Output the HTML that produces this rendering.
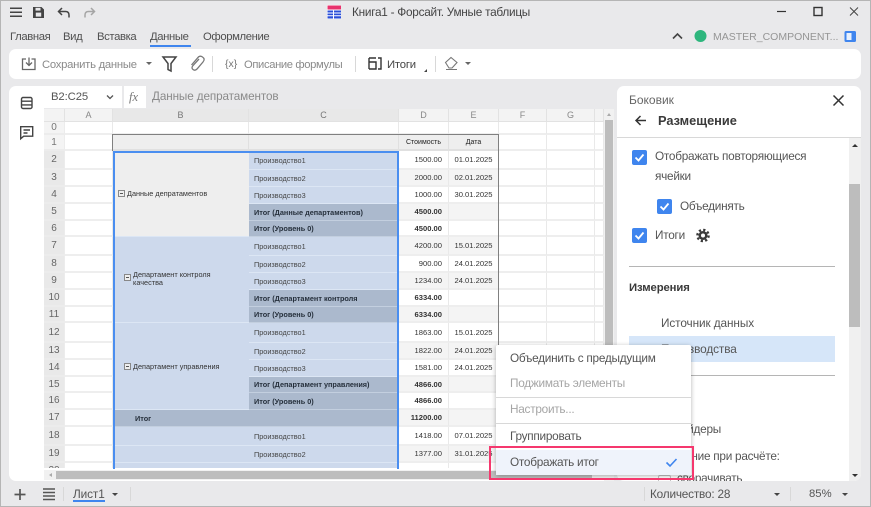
<!DOCTYPE html>
<html lang="ru"><head><meta charset="utf-8"><title>Книга1</title>
<style>
html,body{margin:0;padding:0}
body{width:871px;height:507px;overflow:hidden;position:relative;background:#e9e9eb;font-family:"Liberation Sans",sans-serif;color:#555}
.a{position:absolute}
.t{position:absolute;white-space:nowrap;line-height:16px;font-size:11.8px;letter-spacing:-.26px;margin-top:1px}
.tab{font-size:11.3px;letter-spacing:-.38px;color:#505050}
.g{color:#8a8a8a}
svg{position:absolute;overflow:visible}
.sep{position:absolute;width:1px;background:#d8d8d8}
.arr{position:absolute;width:0;height:0;border-left:3px solid transparent;border-right:3px solid transparent;border-top:3px solid #666}
#grid{position:absolute;left:44px;top:109px;width:560px;height:359px;overflow:hidden;background:#fff}
table{border-collapse:separate;border-spacing:0;table-layout:fixed;width:560px;font-size:7.3px;color:#333}
td{box-sizing:border-box;padding:0;border-right:1px solid #e9e9e9;border-bottom:2px solid #eeeeee;overflow:hidden;white-space:nowrap;line-height:9px}
.h{background:#f3f3f3;color:#888;text-align:center;font-size:9px;border-color:#e2e2e2;border-bottom-width:1px}
.hs{background:#e8e8e8;color:#777}
.r{background:#f4f4f4;color:#777;text-align:center;font-size:10px;border-color:#ececec}
.rs{background:#e9e9e9;color:#666}
.c{background:#cdd9ec;border-color:#dce6f4;border-bottom-width:1px;padding-left:5px;color:#444;border-right:0}
.s{background:#abb9cd;border-color:#c3cfdf;border-bottom-width:1px;padding-left:5px;font-weight:bold;color:#26303c;border-right:0}
.b{background:#cdd9ec;border-color:#dce6f4;border-bottom-width:1px;border-right:0;position:relative}
.n{text-align:right;padding-right:6px;color:#333;font-size:7.6px}
.d{text-align:center;color:#333;font-size:7.6px}
.w{background:#fff}.f{background:#f4f4f4}
.k{font-weight:bold}
.hh{background:#eeeeee;text-align:center;font-size:7px;color:#222;border-color:#e0e0e0}
.m{display:inline-block;box-sizing:border-box;width:7px;height:7px;border:1px solid #888;background:#eee;position:relative;vertical-align:-1px;margin-right:2px}
.m:after{content:"";position:absolute;left:1px;right:1px;top:2px;height:1px;background:#555}
.cb{position:absolute;width:15px;height:15px;border-radius:2px;background:#3f85ee}
.mi{position:absolute;left:510px;white-space:nowrap;line-height:16px;font-size:11.8px;letter-spacing:-.26px;color:#555}
</style></head><body>

<div class="a" style="left:0;top:0;width:871px;height:1px;background:#b5b5b5"></div>
<div class="a" style="left:0;top:0;width:1px;height:507px;background:#b5b5b5"></div>
<div class="a" style="left:870px;top:0;width:1px;height:507px;background:#b5b5b5"></div>
<div class="a" style="left:0;top:506px;width:871px;height:1px;background:#b5b5b5"></div>

<!-- title bar -->
<svg style="left:0;top:0" width="871" height="48" fill="none" stroke="#444" stroke-width="1.5">
<path d="M10 8.200H22M10 12.200H22M10 16.200H22"/>
<path d="M33 7h8.500l2.500 2.500V18H33z" fill="#444" stroke="none"/><rect x="35.500" y="7.800" width="5" height="2.800" fill="#e9e9eb" stroke="none"/><rect x="35.800" y="12.600" width="5.400" height="4" fill="#e9e9eb" stroke="none"/>
<path d="M62 8 58.500 11.500 62 15M59 11.500h6.500q3.500 0 3.500 3.500v2.500"/>
<path d="M91 8 94.500 11.500 91 15M94 11.500h-5.500q-3.500 0-3.500 3.500v2.500" stroke="#a5a5a5"/>
<rect x="327" y="5" width="14" height="14" fill="#fff" stroke="none"/>
<rect x="327.500" y="5.500" width="13.500" height="4" fill="#e8336d" stroke="none"/>
<path d="M327.500 10.500h13.500v8h-13.500z" fill="#2a4fd8" stroke="none"/>
<path d="M327.500 13h13.500M327.500 15.800h13.500M333.500 10v9" stroke="#fff" stroke-width="1"/>
<path d="M777 11.500h9" stroke="#333" stroke-width="1.200"/>
<rect x="814" y="7.500" width="8" height="8" stroke="#333" stroke-width="1.400"/>
<path d="M850 7.500l8 8M858 7.500l-8 8" stroke="#444" stroke-width="1"/>
<path d="M673 38.500l4.500-4.500 4.500 4.500" stroke="#444" stroke-width="1.600"/>
<circle cx="700.500" cy="36" r="6" fill="#2eb67d" stroke="none"/>
<rect x="844.500" y="31" width="11.500" height="11" rx="1.500" fill="#3f85ee" stroke="none"/><rect x="846.500" y="33" width="5" height="7" fill="#e7f0fd" stroke="none"/>
</svg>
<div class="t" style="left:352px;top:3px;color:#444">Книга1 - Форсайт. Умные таблицы</div>
<div class="t tab" style="left:10px;top:28px">Главная</div>
<div class="t tab" style="left:63px;top:28px">Вид</div>
<div class="t tab" style="left:97px;top:28px">Вставка</div>
<div class="t tab" style="left:150px;top:28px">Данные</div>
<div class="t tab" style="left:203px;top:28px">Оформление</div>
<div class="a" style="left:150px;top:45px;width:41px;height:1.500px;background:#3f85ee"></div>
<div class="t g" style="left:713px;top:28px;font-size:10.500px;letter-spacing:0;color:#959595">MASTER_COMPONENT...</div>

<!-- toolbar -->
<div class="a" style="left:9px;top:49px;width:852px;height:30px;background:#fff;border-radius:7px"></div>
<svg style="left:0;top:49px" width="500" height="30" fill="none" stroke="#777" stroke-width="1.300">
<path d="M26 10h-3.500v10.500h12.500V10h-3.500M29 8.500v8M26 13.500l3 3 3-3" stroke="#666"/>
<path d="M163 8h13l-5 6.500V22l-3-1.500v-6z" stroke="#444" stroke-width="1.500"/>
<path d="M199 10l-6 6.500q-2 2.500 0 4t4-.5l6-7q2.500-3-.5-5t-5 1l-6 7" stroke="#777"/>
<path d="M369 9h7M369 13h7v7h-7M378 9h3v11h-3M369 9v11" stroke="#333" stroke-width="1.400"/>
<path d="M424 23l3-3v3z" fill="#444" stroke="none"/>
<path d="M445.500 13.500l5.500-5 6 5-5 5.500h-3zM446 20.500h11" stroke="#777" stroke-width="1.100"/>
</svg>
<div class="t g" style="left:225px;top:55px;font-size:10.500px;letter-spacing:0;color:#777">{x}</div>
<div class="t g" style="left:42px;top:56px;font-size:11.300px;letter-spacing:-.27px">Сохранить данные</div>
<div class="arr" style="left:146px;top:62px"></div>
<div class="sep" style="left:212px;top:56px;height:16px"></div>
<div class="t g" style="left:244px;top:56px;font-size:11.200px;letter-spacing:-.35px">Описание формулы</div>
<div class="sep" style="left:355px;top:56px;height:16px"></div>
<div class="t" style="left:387px;top:56px;color:#444;font-size:11.300px;letter-spacing:-.2px">Итоги</div>
<div class="sep" style="left:435px;top:56px;height:16px"></div>
<div class="arr" style="left:465px;top:62px"></div>

<!-- left strip -->
<div class="a" style="left:9px;top:86px;width:40px;height:395px;background:#fff;border-radius:7px 0 0 7px"></div>
<svg style="left:0;top:86px" width="44" height="60" fill="none" stroke="#444" stroke-width="1.400">
<rect x="21.500" y="11.500" width="10.500" height="11" rx="1.500"/><path d="M21.500 15.200h10.500M21.500 18.900h10.500"/>
<path d="M20.700 40.700h12v9.500h-9l-3 2.500z"/><path d="M23.500 44h6.500M23.500 47h4" />
</svg>

<!-- sheet area -->
<div class="a" style="left:44px;top:86px;width:570px;height:395px;background:#fff"></div>
<div class="a" style="left:44px;top:86px;width:573px;height:23px;background:#e9e9eb"></div>
<div class="a" style="left:44px;top:86px;width:78px;height:22px;background:#fff"></div>
<div class="a" style="left:124px;top:86px;width:22px;height:22px;background:#fff"></div>
<div class="t" style="left:51px;top:88px;color:#555;font-size:11.300px;letter-spacing:-.1px">B2:C25</div>
<svg style="left:0;top:86px" width="122" height="22" fill="none" stroke="#555" stroke-width="1.300"><path d="M107 9.500l3 3 3-3"/></svg>
<div class="t" style="left:129px;top:88px;font-family:'Liberation Serif',serif;font-style:italic;color:#777;font-size:12.500px;letter-spacing:0">fx</div>
<div class="t g" style="left:152px;top:88px;font-size:11.700px;letter-spacing:-.1px">Данные депратаментов</div>

<div id="grid"><table>
<colgroup><col style="width:21px"><col style="width:48px"><col style="width:136px"><col style="width:150px"><col style="width:50px"><col style="width:50px"><col style="width:48px"><col style="width:48px"><col style="width:9px"></colgroup>
<tr style="height:13px"><td class="h"></td><td class="h">A</td><td class="h hs">B</td><td class="h hs">C</td><td class="h">D</td><td class="h">E</td><td class="h">F</td><td class="h">G</td><td class="h"></td></tr>
<tr style="height:13px"><td class="r">0</td><td></td><td></td><td></td><td></td><td></td><td></td><td></td><td></td></tr>
<tr style="height:16px"><td class="r">1</td><td></td><td class="hh"></td><td class="hh"></td><td class="hh">Стоимость</td><td class="hh">Дата</td><td></td><td></td><td></td></tr>
<tr style="height:19px"><td class="r rs">2</td><td></td><td rowspan="5" class="b" style="background:#eeeeee;padding-left:5px;border-color:#dce6f4"><span class="m"></span>Данные депратаментов</td><td class="c">Производство1</td><td class="n w">1500.00</td><td class="d w">01.01.2025</td><td></td><td></td><td></td></tr>
<tr style="height:17px"><td class="r rs">3</td><td></td><td class="c">Производство2</td><td class="n f">2000.00</td><td class="d f">02.01.2025</td><td></td><td></td><td></td></tr>
<tr style="height:17px"><td class="r rs">4</td><td></td><td class="c">Производство3</td><td class="n w">1000.00</td><td class="d w">30.01.2025</td><td></td><td></td><td></td></tr>
<tr style="height:17px"><td class="r rs">5</td><td></td><td class="s">Итог (Данные департаментов)</td><td class="n f k">4500.00</td><td class="d f"></td><td></td><td></td><td></td></tr>
<tr style="height:16px"><td class="r rs">6</td><td></td><td class="s">Итог (Уровень 0)</td><td class="n w k">4500.00</td><td class="d w"></td><td></td><td></td><td></td></tr>
<tr style="height:19px"><td class="r rs">7</td><td></td><td rowspan="5" class="b" style="padding-left:11px"><span class="m" style="position:absolute;left:11px;top:37px"></span><div style="margin-left:9px;line-height:8px;margin-top:-2px">Департамент контроля<br>качества</div></td><td class="c">Производство1</td><td class="n f">4200.00</td><td class="d f">15.01.2025</td><td></td><td></td><td></td></tr>
<tr style="height:17px"><td class="r rs">8</td><td></td><td class="c">Производство2</td><td class="n w">900.00</td><td class="d w">24.01.2025</td><td></td><td></td><td></td></tr>
<tr style="height:17px"><td class="r rs">9</td><td></td><td class="c">Производство3</td><td class="n f">1234.00</td><td class="d f">24.01.2025</td><td></td><td></td><td></td></tr>
<tr style="height:17px"><td class="r rs">10</td><td></td><td class="s">Итог (Департамент контроля</td><td class="n w k">6334.00</td><td class="d w"></td><td></td><td></td><td></td></tr>
<tr style="height:16px"><td class="r rs">11</td><td></td><td class="s">Итог (Уровень 0)</td><td class="n f k">6334.00</td><td class="d f"></td><td></td><td></td><td></td></tr>
<tr style="height:20px"><td class="r rs">12</td><td></td><td rowspan="5" class="b" style="padding-left:11px"><span class="m"></span>Департамент управления</td><td class="c">Производство1</td><td class="n w">1863.00</td><td class="d w">15.01.2025</td><td></td><td></td><td></td></tr>
<tr style="height:17px"><td class="r rs">13</td><td></td><td class="c">Производство2</td><td class="n f">1822.00</td><td class="d f">24.01.2025</td><td></td><td></td><td></td></tr>
<tr style="height:17px"><td class="r rs">14</td><td></td><td class="c">Производство3</td><td class="n w">1581.00</td><td class="d w">24.01.2025</td><td></td><td></td><td></td></tr>
<tr style="height:16px"><td class="r rs">15</td><td></td><td class="s">Итог (Департамент управления)</td><td class="n f k">4866.00</td><td class="d f"></td><td></td><td></td><td></td></tr>
<tr style="height:17px"><td class="r rs">16</td><td></td><td class="s">Итог (Уровень 0)</td><td class="n w k">4866.00</td><td class="d w"></td><td></td><td></td><td></td></tr>
<tr style="height:17px"><td class="r rs">17</td><td></td><td colspan="2" class="s" style="padding-left:22px">Итог</td><td class="n f k">11200.00</td><td class="d f"></td><td></td><td></td><td></td></tr>
<tr style="height:19px"><td class="r rs">18</td><td></td><td class="b"></td><td class="c">Производство1</td><td class="n w">1418.00</td><td class="d w">07.01.2025</td><td></td><td></td><td></td></tr>
<tr style="height:17px"><td class="r rs">19</td><td></td><td class="b"></td><td class="c">Производство2</td><td class="n f">1377.00</td><td class="d f">31.01.2025</td><td></td><td></td><td></td></tr>
<tr style="height:17px"><td class="r rs">20</td><td></td><td class="b" style="padding:4px 0 0 5px;vertical-align:top"><span class="m"></span>Отдел</td><td class="c"></td><td class="n w"></td><td class="d w"></td><td></td><td></td><td></td></tr>
</table></div>
<!-- outer table border -->
<div class="a" style="left:113px;top:134px;width:385px;height:1px;background:#808080"></div>
<div class="a" style="left:498px;top:134px;width:1px;height:334px;background:#808080"></div>
<div class="a" style="left:112px;top:134px;width:1px;height:17px;background:#808080"></div>
<!-- selection -->
<div class="a" style="box-sizing:border-box;left:113px;top:151px;width:286px;height:318px;border:2px solid #4a8ef0;border-bottom:0"></div>

<!-- scrollbars -->
<div class="a" style="left:604px;top:109px;width:10px;height:372px;background:#f1f1f1"></div>
<div class="a" style="left:605px;top:120px;width:8px;height:351px;background:#bdbdbd"></div>
<div class="a" style="left:607px;top:113px;width:0;height:0;border-left:2px solid transparent;border-right:2px solid transparent;border-bottom:3px solid #aaa"></div>
<div class="a" style="left:44px;top:470px;width:570px;height:10px;background:#f1f1f1"></div>
<div class="a" style="left:56px;top:471px;width:536px;height:8px;background:#bdbdbd"></div>
<div class="a" style="left:49px;top:473px;width:0;height:0;border-top:2px solid transparent;border-bottom:2px solid transparent;border-right:3px solid #aaa"></div>

<!-- right panel -->
<div class="a" style="left:617px;top:86px;width:244px;height:395px;background:#fff;border-radius:7px;overflow:hidden">
 <div class="a" style="left:0;top:51px;width:244px;height:1px;background:#d8d8d8"></div>
 <div class="a" style="left:232px;top:52px;width:12px;height:343px;background:#f0f0f0"></div>
 <div class="a" style="left:232px;top:98px;width:11px;height:143px;background:#bdbdbd"></div>
 <div class="a" style="left:235px;top:58px;width:0;height:0;border-left:3px solid transparent;border-right:3px solid transparent;border-bottom:3px solid #333"></div>
 <div class="a" style="left:235px;top:388px;width:0;height:0;border-left:3px solid transparent;border-right:3px solid transparent;border-top:3px solid #333"></div>
 <div class="a" style="left:12px;top:180px;width:206px;height:1px;background:#b5b5b5"></div>
 <div class="a" style="left:12px;top:250px;width:206px;height:26px;background:#d6e6f9"></div>
 <div class="a" style="left:12px;top:289px;width:206px;height:1px;background:#b5b5b5"></div>
 <div class="a" style="left:41px;top:389px;width:11px;height:11px;border:1px solid #c4c4c4;border-radius:2px"></div>
</div>
<div class="t" style="left:629px;top:91px;color:#666;font-size:12px;letter-spacing:0">Боковик</div>
<svg style="left:617px;top:86px" width="244" height="160" fill="none" stroke="#333" stroke-width="1.500">
<path d="M216.500 9.500l10 10M226.500 9.500l-10 10"/>
<path d="M19 34.500h10M23.500 30l-4.500 4.500 4.500 4.500"/>
</svg>
<div class="t" style="left:658px;top:112px;font-weight:bold;font-size:12.800px;letter-spacing:0;color:#3a3a3a">Размещение</div>

<div class="cb" style="left:632px;top:150px"></div>
<div class="cb" style="left:657px;top:199px"></div>
<div class="cb" style="left:632px;top:228px"></div>
<svg style="left:0;top:0" width="871" height="300" fill="none" stroke="#fff" stroke-width="1.800">
<path d="M635.500 157.500l3 3 5-6M660.500 206.500l3 3 5-6M635.500 235.500l3 3 5-6"/>
<circle cx="703" cy="235.500" r="4.500" fill="#3a3a3a" stroke="none"/>
<circle cx="703" cy="235.500" r="5.600" stroke="#3a3a3a" stroke-width="2.400" stroke-dasharray="2.200 2.200"/>
<circle cx="703" cy="235.500" r="2" fill="#fff" stroke="none"/>
</svg>
<div class="t" style="left:655px;top:147px">Отображать повторяющиеся</div>
<div class="t" style="left:655px;top:167px">ячейки</div>
<div class="t" style="left:680px;top:197px">Объединять</div>
<div class="t" style="left:655px;top:226px">Итоги</div>
<div class="t" style="left:629px;top:279px;font-weight:bold;color:#3a3a3a;font-size:11.300px;letter-spacing:-.1px">Измерения</div>
<div class="t" style="left:661px;top:314px;letter-spacing:-.1px">Источник данных</div>
<div class="t" style="left:661px;top:340px;letter-spacing:-.1px">Производства</div>
<div class="t" style="left:666px;top:420px">Слайдеры</div>
<div class="t" style="left:652px;top:447px">Поведение при расчёте:</div>
<div class="a" style="left:617px;top:470px;width:232px;height:11px;overflow:hidden"><div class="t" style="left:60px;top:-1px">сворачивать</div></div>

<!-- context menu -->
<div class="a" style="left:496px;top:345px;width:195px;height:130px;background:#fff;box-shadow:0 1px 5px rgba(0,0,0,.3);border-radius:2px"></div>
<div class="a" style="left:496px;top:397px;width:195px;height:1px;background:#d8d8d8"></div>
<div class="a" style="left:496px;top:423px;width:195px;height:1px;background:#d8d8d8"></div>
<div class="a" style="left:496px;top:450px;width:195px;height:25px;background:#eff3fb"></div>
<div class="mi" style="top:350px">Объединить с предыдущим</div>
<div class="mi" style="top:375px;color:#a5a5a5">Поджимать элементы</div>
<div class="mi" style="top:401px;color:#a5a5a5">Настроить...</div>
<div class="mi" style="top:428px">Группировать</div>
<div class="mi" style="top:454px">Отображать итог</div>
<svg style="left:660px;top:450px" width="24" height="25" fill="none" stroke="#3f85ee" stroke-width="1.600"><path d="M6.500 12.500l3.500 3.500 6.500-7"/></svg>
<div class="a" style="box-sizing:border-box;left:489px;top:446px;width:205px;height:34px;border:2px solid #f5386e"></div>

<!-- status bar -->
<svg style="left:0;top:481px" width="140" height="26" fill="none" stroke="#555" stroke-width="1.500">
<path d="M14.500 13.500h11M20 8v11" stroke-width="1.700"/>
<path d="M43 8h12M43 11.500h12M43 15h12M43 18.500h12" stroke-width="1.400"/>
</svg>
<div class="sep" style="left:63px;top:487px;height:14px"></div>
<div class="t" style="left:73px;top:485px;font-size:11.800px;letter-spacing:-.1px;color:#555">Лист1</div>
<div class="a" style="left:73px;top:500px;width:32px;height:1.500px;background:#3f85ee"></div>
<div class="arr" style="left:112px;top:493px;border-top-color:#444"></div>
<div class="sep" style="left:130px;top:487px;height:14px"></div>
<div class="sep" style="left:644px;top:487px;height:14px"></div>
<div class="t" style="left:650px;top:485px;font-size:11.800px;letter-spacing:-.2px">Количество: 28</div>
<div class="arr" style="left:774px;top:493px;border-top-color:#444"></div>
<div class="sep" style="left:790px;top:487px;height:14px"></div>
<div class="t" style="left:809px;top:485px;font-size:11.300px;letter-spacing:0">85%</div>
<div class="arr" style="left:842px;top:493px;border-top-color:#444"></div>
</body></html>
